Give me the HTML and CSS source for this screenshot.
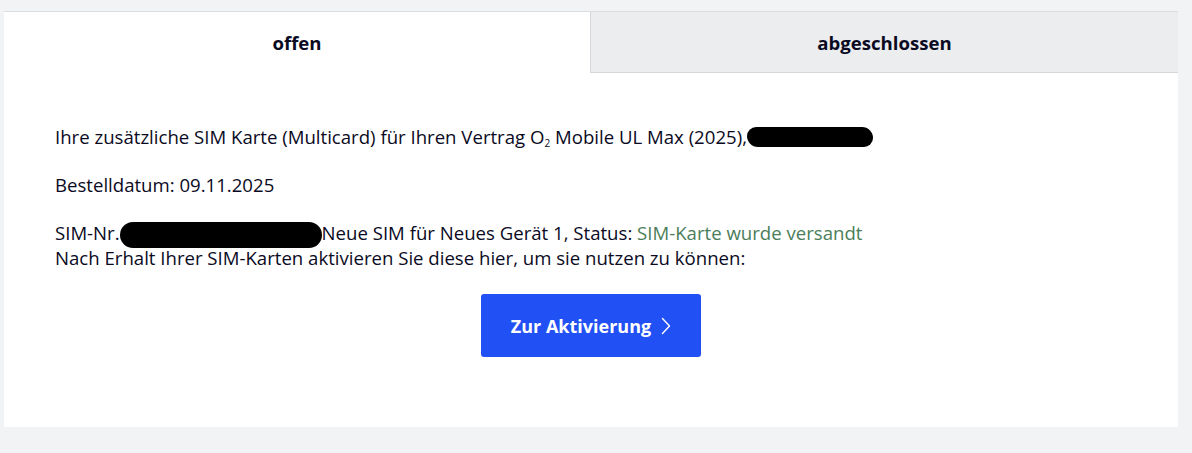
FILE: index.html
```html
<!DOCTYPE html>
<html lang="de">
<head>
<meta charset="utf-8">
<title>Bestellungen</title>
<link rel="stylesheet" href="styles.css">
</head>
<body>
<div class="card">
  <div class="tabs">
    <div class="tab tab-active">offen</div>
    <div class="tab tab-inactive">abgeschlossen</div>
  </div>
  <div class="content">
    <p class="para">Ihre zusätzliche SIM Karte (Multicard) für Ihren Vertrag O<sub class="sub">2</sub> Mobile UL Max (2025),<span class="redact redact-a"></span></p>
    <p class="para">Bestelldatum: 09.11.2025</p>
    <p class="para">SIM-Nr.<span class="redact redact-b"></span>Neue SIM für Neues Gerät 1, Status: <span class="status">SIM-Karte wurde versandt</span><br>Nach Erhalt Ihrer SIM-Karten aktivieren Sie diese hier, um sie nutzen zu können:</p>
    <div class="actions">
      <button class="btn" type="button">Zur Aktivierung <svg class="chev" width="10" height="18" viewBox="0 0 10 18"><path d="M1.5 1.5 L8.5 9 L1.5 16.5" fill="none" stroke="#fff" stroke-width="1.4" stroke-linecap="round" stroke-linejoin="round"/></svg></button>
    </div>
  </div>
</div>
</body>
</html>
```
FILE: styles.css
```css
* { box-sizing: border-box; }
html, body { margin: 0; }
body {
  background: #f2f3f5;
  padding: 11px 14px 25px 4px;
  font-family: "Open Sans", Lato, sans-serif;
  color: #0a0a23;
}
.card {
  background: #fff;
  border-top: 1px solid #dcdde0;
}
.tabs {
  display: grid;
  grid-template-columns: 586px 1fr;
  height: 61px;
}
.tab {
  display: flex;
  align-items: center;
  justify-content: center;
  font-weight: 700;
  font-size: 18.6px;
}
.tab-inactive {
  background: #ecedef;
  border-left: 1px solid #d5d6d9;
  border-bottom: 1px solid #d5d6d9;
}
.content {
  padding: 52px 51px 70px;
  font-size: 18.6px;
  line-height: 23px;
}
.para { margin: 0 0 25px; }
.sub { font-size: 10px; vertical-align: -3px; line-height: 0; }
.status { color: #4a7d5a; }
.redact {
  display: inline-block;
  background: #000;
  vertical-align: middle;
}
.redact-a { width: 126px; height: 20px; border-radius: 10px 12px 10px 12px; margin-top: -4px; }
.redact-b { width: 202px; height: 26px; border-radius: 13px; margin: -2px 0; }
.actions {
  display: flex;
  justify-content: center;
  margin-top: 17px;
}
.btn {
  width: 220px;
  height: 63px;
  background: #2150f5;
  border: 0;
  border-radius: 3px;
  color: #fff;
  font-family: inherit;
  font-size: 18px;
  font-weight: 700;
  display: flex;
  align-items: center;
  justify-content: center;
  gap: 10px;
}
.chev { display: block; }
```
